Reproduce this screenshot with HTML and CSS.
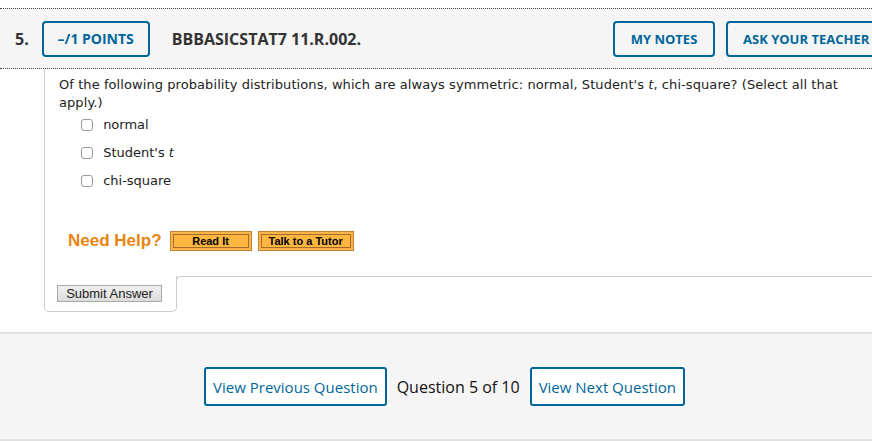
FILE: index.html
```html
<!DOCTYPE html>
<html lang="en">
<head>
<meta charset="UTF-8">
<meta name="viewport" content="width=device-width, initial-scale=1.0">
<title>Question 5</title>
<link rel="stylesheet" href="styles.css">
</head>
<body>
<div class="question-header">
    <span class="q-number">5.</span>
    <button class="outline-btn points-btn">&ndash;/1 POINTS</button>
    <span class="q-title">BBBASICSTAT7 11.R.002.</span>
    <div class="header-actions">
        <button class="outline-btn">MY NOTES</button>
        <button class="outline-btn ask-btn">ASK YOUR TEACHER</button>
    </div>
</div>

<div class="question-box">
    <div class="question-body">
        <p class="prompt">Of the following probability distributions, which are always symmetric: normal, Student's <i>t</i>, chi-square? (Select all that apply.)</p>
        <ul class="choices">
            <li><label><input type="checkbox"> normal</label></li>
            <li><label><input type="checkbox"> Student's <i>t</i></label></li>
            <li><label><input type="checkbox"> chi-square</label></li>
        </ul>
        <div class="need-help">
            <span class="help-label">Need Help?</span>
            <button class="help-btn read-btn">Read It</button>
            <button class="help-btn">Talk to a Tutor</button>
        </div>
    </div>
    <div class="submit-row">
        <div class="submit-cell">
            <button class="submit-btn">Submit Answer</button>
        </div>
        <div class="submit-fill"></div>
    </div>
</div>

<div class="question-nav">
    <button class="outline-btn nav-btn">View Previous Question</button>
    <span class="nav-count">Question 5 of 10</span>
    <button class="outline-btn nav-btn">View Next Question</button>
</div>
</body>
</html>
```

FILE: styles.css
```css
body {
    margin: 0;
    padding: 0;
    font-family: "DejaVu Sans", Verdana, sans-serif;
    color: #222;
    overflow: hidden;
}

.question-header {
    margin-top: 8px;
    height: 59px;
    display: flex;
    align-items: center;
    padding-left: 15px;
    background-color: #f5f5f5;
    border-top: 1px dotted #444;
    border-bottom: 1px dotted #444;
    font-family: "Open Sans", sans-serif;
}

.q-number {
    font-size: 16px;
    font-weight: bold;
    color: #333;
    margin-right: 13px;
}

.outline-btn {
    height: 36px;
    padding: 0 14px;
    background-color: #fff;
    border: 2px solid #00669a;
    border-radius: 4px;
    color: #00669a;
    font-family: "Open Sans", sans-serif;
    font-size: 13px;
    font-weight: bold;
    cursor: pointer;
}

.question-header .outline-btn {
    background-color: transparent;
}

.points-btn {
    width: 108px;
    font-size: 14px;
    padding: 0;
}

.q-title {
    margin-left: 22px;
    font-size: 16px;
    font-weight: bold;
    color: #333;
}

.header-actions {
    margin-left: auto;
    margin-right: -32px;
    display: flex;
    gap: 11px;
}

.header-actions .outline-btn {
    width: 102px;
}

.header-actions .ask-btn {
    width: 178px;
    text-align: left;
    padding-left: 15px;
}

.question-box {
    margin-left: 44px;
}

.question-body {
    border-left: 1px solid #ccc;
    padding: 7px 0 0 14px;
    height: 200px;
}

.prompt {
    margin: 0;
    font-size: 13px;
    line-height: 18px;
    letter-spacing: 0.075px;
    padding-right: 25px;
}

.choices {
    list-style: none;
    margin: -1px 0 0 0;
    padding: 0 0 0 22px;
    font-size: 13px;
}

.choices li {
    height: 28px;
    line-height: 28px;
}

.choices input {
    appearance: none;
    width: 12px;
    height: 12px;
    margin: 0 6px 0 0;
    border: 1px solid #999;
    border-radius: 3px;
    background-color: #fff;
    vertical-align: -2px;
}

.need-help {
    display: flex;
    align-items: center;
    margin-top: 36px;
    padding-left: 9px;
}

.help-label {
    font-family: "Liberation Sans", Arial, sans-serif;
    font-weight: bold;
    font-size: 17px;
    color: #ea8410;
    margin-right: 8px;
}

.help-btn {
    height: 20px;
    padding: 0 10px;
    margin-right: 6px;
    background-color: #fdb640;
    border: 1px solid #c7802d;
    box-shadow: inset 0 0 0 2px #fbb447, inset 0 0 0 3px #a46c2a;
    font-family: "Liberation Sans", Arial, sans-serif;
    font-size: 11px;
    font-weight: bold;
    color: #000;
    cursor: pointer;
}

.read-btn {
    width: 82px;
}

.submit-row {
    display: flex;
    align-items: flex-start;
}

.submit-cell {
    width: 133px;
    height: 36px;
    border-left: 1px solid #ccc;
    border-right: 1px solid #ccc;
    border-bottom: 1px solid #ccc;
    border-radius: 0 0 5px 5px;
    padding: 9px 0 0 12px;
    box-sizing: border-box;
}

.submit-btn {
    width: 105px;
    height: 17px;
    padding: 0;
    background: linear-gradient(#f0f0f0, #dcdcdc);
    border: 1px solid #a9a9a9;
    font-family: "Liberation Sans", Arial, sans-serif;
    font-size: 13px;
    color: #222;
    display: block;
}

.submit-fill {
    flex: 1;
    height: 10px;
    margin-left: -1px;
    border-top: 1px solid #ccc;
    border-left: 1px solid #ccc;
    border-top-left-radius: 5px;
}

.question-nav {
    margin-top: 20px;
    height: 105px;
    display: flex;
    align-items: center;
    justify-content: center;
    gap: 10px;
    padding-left: 17px;
    background-color: #f5f5f5;
    border-top: 2px solid #e2e2e2;
    border-bottom: 2px solid #e2e2e2;
    font-family: "Open Sans", sans-serif;
}

.nav-btn {
    height: 39px;
    padding: 0 7px;
    border-radius: 3px;
    font-size: 15px;
    font-weight: normal;
}

.nav-count {
    font-size: 16px;
    color: #111;
}
```
